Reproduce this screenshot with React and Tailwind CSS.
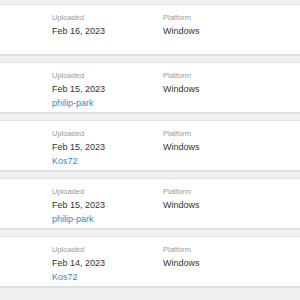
import React from "react";

const rows = [
  { date: "Feb 16, 2023", user: null },
  { date: "Feb 15, 2023", user: "philip-park" },
  { date: "Feb 15, 2023", user: "Kos72" },
  { date: "Feb 15, 2023", user: "philip-park" },
  { date: "Feb 14, 2023", user: "Kos72" },
];

export default function App() {
  return (
    <div
      className="w-[300px] h-[300px] overflow-hidden bg-[#f0f0f0] pt-[4px] flex flex-col gap-[6px]"
      style={{ fontFamily: '"Liberation Sans", Arial, sans-serif' }}
    >
      {rows.map((r, i) => (
        <div
          key={i}
          className="shrink-0 h-[52px] bg-white border-t border-[#e2e2e2] border-b-2 border-b-[#e0e0e0] flex pl-[52px] pt-[7px]"
        >
          <div className="w-[111px] flex flex-col">
            <div className="text-[7.5px] leading-[12px] text-[#9a9a9a]">Uploaded</div>
            <div className="text-[9px] leading-[14px] text-[#333]">{r.date}</div>
            {r.user && (
              <div className="text-[9px] leading-[14px] text-[#3d85c6]">{r.user}</div>
            )}
          </div>
          <div className="flex flex-col">
            <div className="text-[7.5px] leading-[12px] text-[#9a9a9a]">Platform</div>
            <div className="text-[9px] leading-[14px] text-[#333]">Windows</div>
          </div>
        </div>
      ))}
    </div>
  );
}
